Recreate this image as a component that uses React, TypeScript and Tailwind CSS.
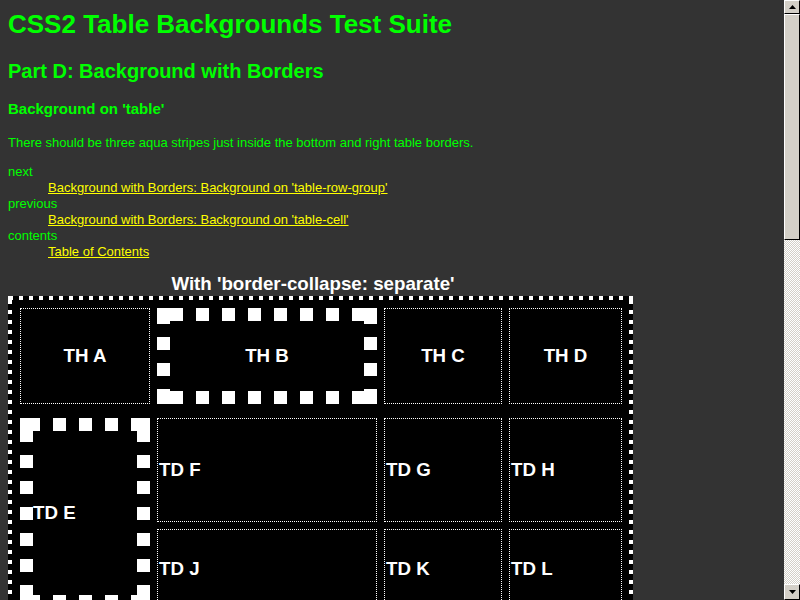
import React from 'react';

const thinCell = 'flex items-center border border-dotted border-white p-px text-[18.72px] font-bold leading-[22px] text-white';

// square-dash borders, drawn with background layers (13px thick, 26px period)
const thickHead =
  '[background:linear-gradient(#fff,#fff)_left_top/13px_13px_no-repeat,linear-gradient(#fff,#fff)_right_top/13px_13px_no-repeat,linear-gradient(#fff,#fff)_left_bottom/13px_13px_no-repeat,linear-gradient(#fff,#fff)_right_bottom/13px_13px_no-repeat,linear-gradient(90deg,#fff_13px,transparent_13px)_13px_top/26px_13px_repeat-x,linear-gradient(90deg,#fff_13px,transparent_13px)_13px_bottom/26px_13px_repeat-x,linear-gradient(#fff_13px,transparent_13px)_left_3px/13px_26px_repeat-y,linear-gradient(#fff_13px,transparent_13px)_right_3px/13px_26px_repeat-y,#000]';

const thickBody =
  '[background:linear-gradient(#fff,#fff)_left_top/13px_13px_no-repeat,linear-gradient(#fff,#fff)_right_top/13px_13px_no-repeat,linear-gradient(#fff,#fff)_left_bottom/13px_13px_no-repeat,linear-gradient(#fff,#fff)_right_bottom/13px_13px_no-repeat,linear-gradient(90deg,#fff_13px,transparent_13px)_7px_top/26px_13px_repeat-x,linear-gradient(90deg,#fff_13px,transparent_13px)_7px_bottom/26px_13px_repeat-x,linear-gradient(#fff_13px,transparent_13px)_left_11px/13px_26px_repeat-y,linear-gradient(#fff_13px,transparent_13px)_right_11px/13px_26px_repeat-y,#000]';

// outer table border: 4px squares, 10px period
const tableBorder =
  '[background:linear-gradient(#fff,#fff)_left_top/4px_4px_no-repeat,linear-gradient(#fff,#fff)_right_top/4px_4px_no-repeat,linear-gradient(#fff,#fff)_left_bottom/4px_4px_no-repeat,linear-gradient(#fff,#fff)_right_bottom/4px_4px_no-repeat,linear-gradient(90deg,#fff_4px,transparent_4px)_1px_top/10px_4px_repeat-x,linear-gradient(90deg,#fff_4px,transparent_4px)_1px_bottom/10px_4px_repeat-x,linear-gradient(#fff_4px,transparent_4px)_left_4px/4px_10px_repeat-y,linear-gradient(#fff_4px,transparent_4px)_right_4px/4px_10px_repeat-y,#000]';

const NavLink: React.FC<{ children: React.ReactNode }> = ({ children }) => (
  <dd className="ml-10">
    <a href="#" className="text-[#ffff00] underline">{children}</a>
  </dd>
);

const Scrollbar: React.FC = () => (
  <div className="flex w-4 shrink-0 flex-col bg-[repeating-conic-gradient(#d4d0c8_0_25%,#ffffff_0_50%)] bg-[length:2px_2px]">
    <div className="flex h-[14px] items-center justify-center border border-t-white border-l-white border-r-black border-b-black bg-[#d4d0c8]">
      <svg width="7" height="4" viewBox="0 0 7 4"><polygon points="3.5,0 7,4 0,4" fill="#000" /></svg>
    </div>
    <div className="h-[226px] border border-t-white border-l-white border-r-black border-b-black bg-[#d4d0c8]" />
    <div className="flex-1" />
    <div className="flex h-4 items-center justify-center border border-t-white border-l-white border-r-black border-b-black bg-[#d4d0c8]">
      <svg width="7" height="4" viewBox="0 0 7 4"><polygon points="0,0 7,0 3.5,4" fill="#000" /></svg>
    </div>
  </div>
);

export default function App() {
  return (
    <div className="flex h-[600px] w-[800px] overflow-hidden bg-[#333333] font-['Liberation_Sans',Arial,sans-serif] text-[#00ff00]">
      <div className="flex-1 overflow-hidden px-2">
        <h1 className="mt-[9px] text-[26px] font-bold leading-[30px]">CSS2 Table Backgrounds Test Suite</h1>
        <h2 className="mt-[20px] text-[20px] font-bold leading-[24px]">Part D: Background with Borders</h2>
        <h3 className="mt-[17px] text-[15px] font-bold leading-[18px]">Background on 'table'</h3>
        <p className="mt-[17px] text-[13px] leading-[16px]">
          There should be three aqua stripes just inside the bottom and right table borders.
        </p>

        <dl className="mt-[13px] text-[13px] leading-[16px]">
          <dt>next</dt>
          <NavLink>Background with Borders: Background on 'table-row-group'</NavLink>
          <dt>previous</dt>
          <NavLink>Background with Borders: Background on 'table-cell'</NavLink>
          <dt>contents</dt>
          <NavLink>Table of Contents</NavLink>
        </dl>

        <div className="mt-[13px] w-[625px] pr-[15px] text-center text-[18.72px] font-bold leading-[22px] text-white">
          With 'border-collapse: separate'
        </div>

        <div className={`mt-[1px] w-[625px] pt-3 pl-3 pr-[11px] pb-[11px] ${tableBorder}`}>
          {/* thead */}
          <div className="grid h-[96px] grid-cols-[130px_220px_118px_113px] gap-x-[7px]">
            <div className={`${thinCell} justify-center`}>TH A</div>
            <div className={`flex items-center justify-center p-[13px] text-[18.72px] font-bold leading-[22px] text-white ${thickHead}`}>TH B</div>
            <div className={`${thinCell} justify-center`}>TH C</div>
            <div className={`${thinCell} justify-center`}>TH D</div>
          </div>

          {/* tbody */}
          <div className="mt-[14px] grid grid-cols-[130px_220px_118px_113px] grid-rows-[104px_79px] gap-x-[7px] gap-y-[7px]">
            <div className={`row-span-2 flex items-center p-[13px] text-[18.72px] font-bold leading-[22px] text-white ${thickBody}`}>TD E</div>
            <div className={thinCell}>TD F</div>
            <div className={thinCell}>TD G</div>
            <div className={thinCell}>TD H</div>
            <div className={thinCell}>TD J</div>
            <div className={thinCell}>TD K</div>
            <div className={thinCell}>TD L</div>
          </div>
        </div>
      </div>
      <Scrollbar />
    </div>
  );
}
